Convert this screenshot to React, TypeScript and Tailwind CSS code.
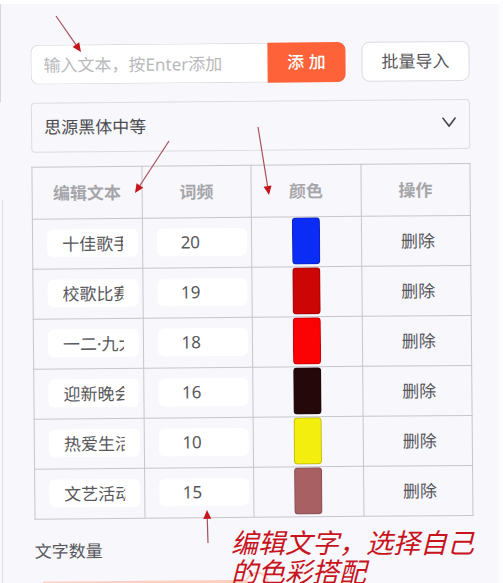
import React from 'react';

const rows = [
  { text: '十佳歌手', count: 20, color: '#0a2cf5' },
  { text: '校歌比赛', count: 19, color: '#cc0505' },
  { text: '一二·九大合唱', count: 18, color: '#fb0204' },
  { text: '迎新晚会', count: 16, color: '#25080a' },
  { text: '热爱生活', count: 10, color: '#f3ee0d' },
  { text: '文艺活动', count: 15, color: '#a96062' },
];

function Arrow({ x1, y1, x2, y2 }: { x1: number; y1: number; x2: number; y2: number }) {
  const length = Math.hypot(x2 - x1, y2 - y1);
  const ux = (x2 - x1) / length;
  const uy = (y2 - y1) / length;
  const bx = x2 - ux * 9;
  const by = y2 - uy * 9;
  return (
    <g>
      <line x1={x1} y1={y1} x2={bx} y2={by} stroke="#a8505a" strokeWidth="1.2" />
      <polygon
        points={`${x2},${y2} ${bx - uy * 4},${by + ux * 4} ${bx + uy * 4},${by - ux * 4}`}
        fill="#c4141c"
      />
    </g>
  );
}

export default function App() {
  return (
    <div className="relative h-screen overflow-hidden border-t-4 border-r-4 border-t-white border-r-[#fcfcfe] bg-[#f7f7fc] font-['Noto_Sans','Noto_Sans_CJK_SC',sans-serif] text-[17px] leading-6 text-[#58585c]">
      <main className="origin-top-left rotate-[-0.5deg] pt-[41px] pr-[30px] pl-[30px]">
        <div className="flex gap-4">
          <div className="flex min-w-0 flex-1">
            <input
              aria-label="输入文本"
              placeholder="输入文本，按Enter添加"
              className="h-10 min-w-0 flex-1 rounded-l-lg border border-r-0 border-[#dcdce1] bg-white px-3 placeholder:text-[#b9b9bc] focus:outline-none"
            />
            <button className="h-10 w-[78px] rounded-r-lg bg-[#fd6238] font-medium text-white">添 加</button>
          </div>
          <button className="h-10 w-[108px] rounded-lg border border-[#dcdce1] bg-white">批量导入</button>
        </div>

        <div className="relative mt-[18px]">
          <select
            aria-label="字体"
            className="h-[50px] w-full appearance-none rounded-sm border border-[#dcdce1] bg-transparent px-3 text-[#4b4b4e]"
          >
            <option>思源黑体中等</option>
          </select>
          <svg
            viewBox="0 0 14 10"
            className="pointer-events-none absolute top-[18px] right-3.5 h-2.5 w-3.5"
            fill="none"
            stroke="#48484c"
            strokeWidth="1.6"
          >
            <path d="M0.5 0.5 L7 9 L13.5 0.5" />
          </svg>
        </div>

        <table className="mt-3.5 w-full table-fixed border-collapse text-center [&_td]:border [&_td]:border-[#c6c6cb] [&_th]:border [&_th]:border-[#c6c6cb]">
          <thead>
            <tr className="h-[52px] text-[#a6a6aa]">
              <th>编辑文本</th>
              <th>词频</th>
              <th>颜色</th>
              <th>操作</th>
            </tr>
          </thead>
          <tbody>
            {rows.map((row) => (
              <tr key={row.text} className="h-[50px]">
                <td className="pr-1 pb-0.5 pl-3.5">
                  <input
                    aria-label="编辑文本"
                    defaultValue={row.text}
                    className="block h-7 w-full rounded-md bg-white px-[15px]"
                  />
                </td>
                <td className="pr-1 pb-0.5 pl-3.5">
                  <input
                    aria-label="词频"
                    defaultValue={row.count}
                    className="block h-7 w-full rounded-md bg-white px-6"
                  />
                </td>
                <td className="pb-0.5">
                  <button
                    aria-label="颜色"
                    className="mx-auto block h-[47px] w-7 rounded-sm border border-black/20"
                    style={{ backgroundColor: row.color }}
                  />
                </td>
                <td className="pl-1">
                  <button>删除</button>
                </td>
              </tr>
            ))}
          </tbody>
        </table>

        <label htmlFor="word-count" className="mt-5 block">
          文字数量
        </label>
        <div className="relative mt-[18px] ml-2 h-2 w-[210px] bg-[#fccfc0]">
          <input id="word-count" type="range" className="block h-2 w-full opacity-0" />
          <span className="absolute -top-2 -right-4 size-6 rounded-full border-2 border-[#fccfc0] bg-white" />
        </div>
      </main>

      <div className="absolute top-0 left-0 h-[98px] w-px bg-[#d6d6dc]" />
      <div className="absolute top-[196px] bottom-0 left-0.5 w-px bg-[#dedee4]" />

      <p className="absolute top-[523px] left-[231px] font-['Noto_Sans_CJK_SC',sans-serif] text-[27px] leading-[29px] whitespace-nowrap text-[#c8141d] italic">
        编辑文字，选择自己
        <br />
        的色彩搭配
      </p>

      <svg viewBox="0 0 503 583" className="pointer-events-none absolute -top-1 left-0 h-[583px] w-[503px]">
        <Arrow x1={56} y1={16} x2={81} y2={52} />
        <Arrow x1={169} y1={141} x2={135} y2={193} />
        <Arrow x1={258} y1={127} x2={269} y2={195} />
        <Arrow x1={208} y1={543} x2={207} y2={510} />
      </svg>
    </div>
  );
}
